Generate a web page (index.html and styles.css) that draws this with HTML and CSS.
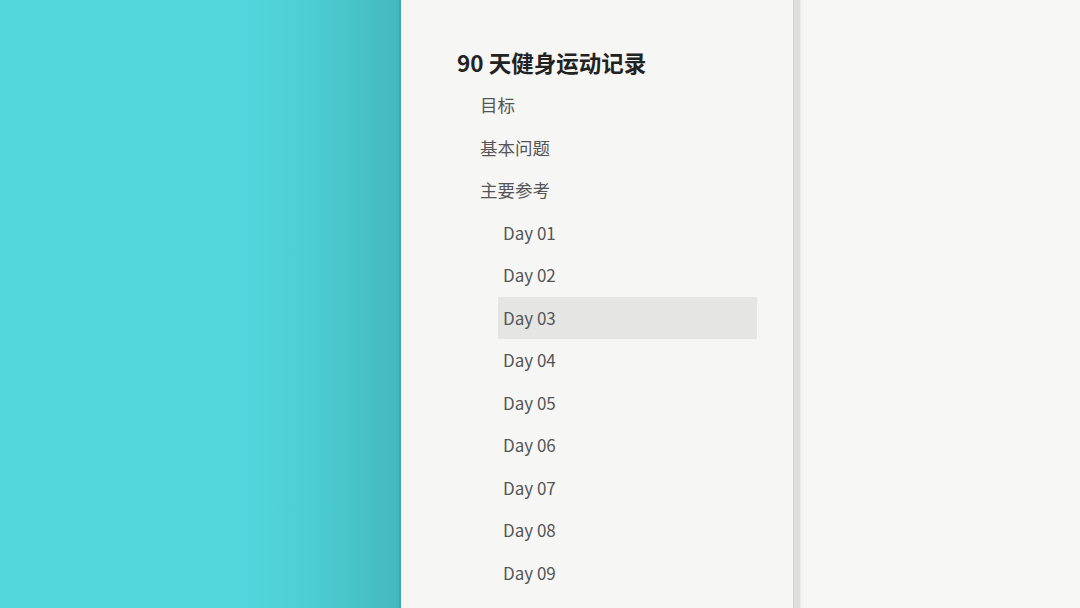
FILE: index.html
```html
<!DOCTYPE html>
<html lang="zh">
<head>
<meta charset="utf-8">
<link rel="stylesheet" href="styles.css">
</head>
<body>
<div class="backdrop"></div>
<aside class="sidebar">
  <h1 class="title">90 天健身运动记录</h1>
  <ul class="toc">
    <li class="item">目标</li>
    <li class="item">基本问题</li>
    <li class="item">主要参考
      <ul class="sub">
        <li class="subitem">Day 01</li>
        <li class="subitem">Day 02</li>
        <li class="subitem active">Day 03</li>
        <li class="subitem">Day 04</li>
        <li class="subitem">Day 05</li>
        <li class="subitem">Day 06</li>
        <li class="subitem">Day 07</li>
        <li class="subitem">Day 08</li>
        <li class="subitem">Day 09</li>
      </ul>
    </li>
  </ul>
</aside>
<div class="scrollbar"><div class="thumb"></div></div>
<main class="content"></main>
</body>
</html>
```
FILE: styles.css
```css
html, body {
  margin: 0;
  padding: 0;
  height: 100%;
  overflow: hidden;
}
body {
  display: flex;
  width: 1080px;
  height: 608px;
  font-family: "Noto Sans CJK SC", "Noto Sans", sans-serif;
  background: #f7f8f6;
}
.backdrop {
  width: 399px;
  flex: none;
  background: linear-gradient(to right, #52d6dc 0%, #52d6dc 60%, #4fd0d7 72%, #4ac6cd 86%, #44b8bf 100%);
  border-right: 2px solid #3ea8ae;
}
.sidebar {
  width: 392px;
  flex: none;
  background: #f6f7f5;
  padding-left: 56px;
  box-sizing: border-box;
}
.title {
  margin: 41px 0 0;
  height: 43px;
  line-height: 42px;
  font-size: 22.5px;
  font-weight: 700;
  color: #222;
  white-space: nowrap;
}
.toc {
  list-style: none;
  margin: 0;
  padding: 0 0 0 23px;
}
.item {
  font-size: 17.5px;
  line-height: 42.5px;
  color: #555;
}
.sub {
  list-style: none;
  margin: 0 0 0 18px;
  padding: 0;
}
.subitem {
  width: 259px;
  padding-left: 5px;
  box-sizing: border-box;
  font-size: 17px;
  line-height: 42.5px;
  color: #555;
}
.subitem.active {
  background: #e5e6e4;
}
.scrollbar {
  width: 11px;
  flex: none;
  display: flex;
  background: #f3f4f2;
}
.thumb {
  width: 8px;
  background: #dedfdd;
  border-left: 1px solid #d2d3d1;
  border-right: 1px solid #ebebea;
  box-sizing: border-box;
}
.content {
  flex: 1;
  background: #f7f8f6;
}
```
